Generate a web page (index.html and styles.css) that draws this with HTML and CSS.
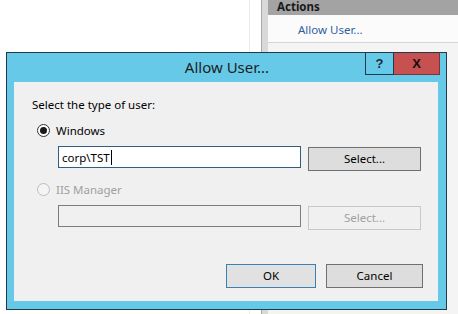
FILE: index.html
```html
<!DOCTYPE html>
<html>
<head>
<meta charset="utf-8">
<link rel="stylesheet" href="styles.css">
</head>
<body>
<div class="desktop">
  <div class="left-pane"><div class="left-inner"></div></div>
  <div class="splitter"></div>
  <div class="actions">
    <div class="actions-head">Actions</div>
    <div class="actions-item">Allow User...</div>
  </div>
</div>

<div class="dialog">
  <div class="titlebar">
    <div class="title">Allow User...</div>
    <div class="caption-btns">
      <div class="cap help">?</div>
      <div class="cap close">X</div>
    </div>
  </div>
  <div class="client">
    <div class="prompt">Select the type of user:</div>
    <div class="radio-row">
      <span class="radio checked"></span><span class="radio-label">Windows</span>
    </div>
    <div class="field-row">
      <div class="textbox focused">corp\TST<span class="caret"></span></div>
      <div class="btn">Select...</div>
    </div>
    <div class="radio-row disabled">
      <span class="radio"></span><span class="radio-label">IIS Manager</span>
    </div>
    <div class="field-row">
      <div class="textbox off"></div>
      <div class="btn off">Select...</div>
    </div>
    <div class="footer">
      <div class="btn ok">OK</div>
      <div class="btn cancel">Cancel</div>
    </div>
  </div>
</div>
</body>
</html>
```
FILE: styles.css
```css
* { box-sizing: border-box; }
html, body { margin: 0; padding: 0; }
body {
  width: 458px;
  height: 314px;
  overflow: hidden;
  position: relative;
  background: #ffffff;
  font-family: "Noto Sans", "Open Sans", sans-serif;
  font-size: 11.5px;
  color: #000;
}

.desktop {
  display: flex;
  height: 314px;
}
.left-pane {
  flex: 0 0 262px;
  background: #ffffff;
  border-right: 1px solid #a9a9a9;
}
.left-inner {
  width: 250px;
  height: 100%;
  border-right: 1px solid #ececec;
}
.splitter {
  flex: 0 0 6px;
  background: #d9d9d9;
}
.actions {
  flex: 1;
  background: #f4f4f4;
}
.actions-head {
  height: 15px;
  background: #a3a3a3;
  font-weight: bold;
  color: #1a1a1a;
  padding-left: 9px;
  line-height: 14px;
  font-size: 11.5px;
}
.actions-item {
  height: 28px;
  padding-left: 30px;
  line-height: 30px;
  color: #2e5f9e;
  border-bottom: 1px solid #d4d4d4;
  background: #fbfbfb;
}

.dialog {
  position: absolute;
  left: 6px;
  top: 52px;
  width: 441px;
  height: 258px;
  border: 1px solid #1f3b4b;
  background: #66c9e8;
  display: flex;
  flex-direction: column;
}
.titlebar {
  height: 29px;
  flex: 0 0 29px;
  position: relative;
}
.title {
  text-align: center;
  font-size: 15px;
  line-height: 28px;
  color: #1e1e1e;
  padding-left: 1px;
}
.caption-btns {
  position: absolute;
  top: -1px;
  right: 6px;
  display: flex;
}
.cap {
  height: 23px;
  font-weight: bold;
  font-family: "Liberation Sans", "DejaVu Sans", sans-serif;
  font-size: 13px;
  text-align: center;
  line-height: 21px;
}
.help {
  width: 29px;
  border: 1px solid #1f3b4b;
  background: #66c9e8;
  color: #1a2a3a;
}
.close {
  width: 46px;
  background: #c75050;
  color: #111;
  border-bottom: 1px solid #7c3535;
  border-right: 1px solid #7c3535;
  border-top: 1px solid #1f3b4b;
}

.client {
  flex: 1;
  margin: 0 8px 8px 7px;
  background: #f0f0f0;
  padding: 15px 0 0 18px;
  display: flex;
  flex-direction: column;
}
.prompt {
  height: 16px;
  line-height: 16px;
}
.radio-row {
  display: flex;
  align-items: center;
  height: 16px;
  margin-top: 9px;
  padding-left: 5px;
}
.radio-row.disabled { margin-top: 10px; color: #a0a0a0; }
.radio {
  width: 13px;
  height: 13px;
  border-radius: 50%;
  border: 1px solid #333;
  background: #fff;
  display: flex;
  align-items: center;
  justify-content: center;
  margin-right: 6px;
}
.radio.checked::after {
  content: "";
  width: 7px;
  height: 7px;
  border-radius: 50%;
  background: #1a1a1a;
}
.radio-row.disabled .radio {
  border-color: #bcbcbc;
  background: #f4f4f4;
}
.field-row {
  display: flex;
  align-items: flex-start;
  margin-top: 8px;
  padding-left: 26px;
  gap: 7px;
}
.textbox {
  width: 243px;
  height: 22px;
  border: 1px solid #7a7a7a;
  background: #fff;
  padding-left: 3px;
  line-height: 19px;
  display: flex;
  align-items: center;
}
.textbox.focused { border-color: #2f5f80; }
.textbox.off { background: #f0f0f0; border-color: #7d7d7d; }
.caret {
  display: inline-block;
  width: 1px;
  height: 15px;
  background: #000;
  margin-left: 1px;
}
.btn {
  width: 113px;
  height: 24px;
  margin-top: 1px;
  border: 1px solid #707070;
  background: #dddddd;
  text-align: center;
  line-height: 21px;
}
.btn.off {
  border-color: #c8c8c8;
  background: #f0f0f0;
  color: #a0a0a0;
}
.footer {
  display: flex;
  justify-content: flex-end;
  gap: 10px;
  margin-top: 34px;
  padding-right: 15px;
}
.footer .btn { margin-top: 0; }
.ok {
  width: 90px;
  border-color: #3c7fb1;
  background: #e1e1e1;
}
.cancel {
  width: 97px;
}
```
